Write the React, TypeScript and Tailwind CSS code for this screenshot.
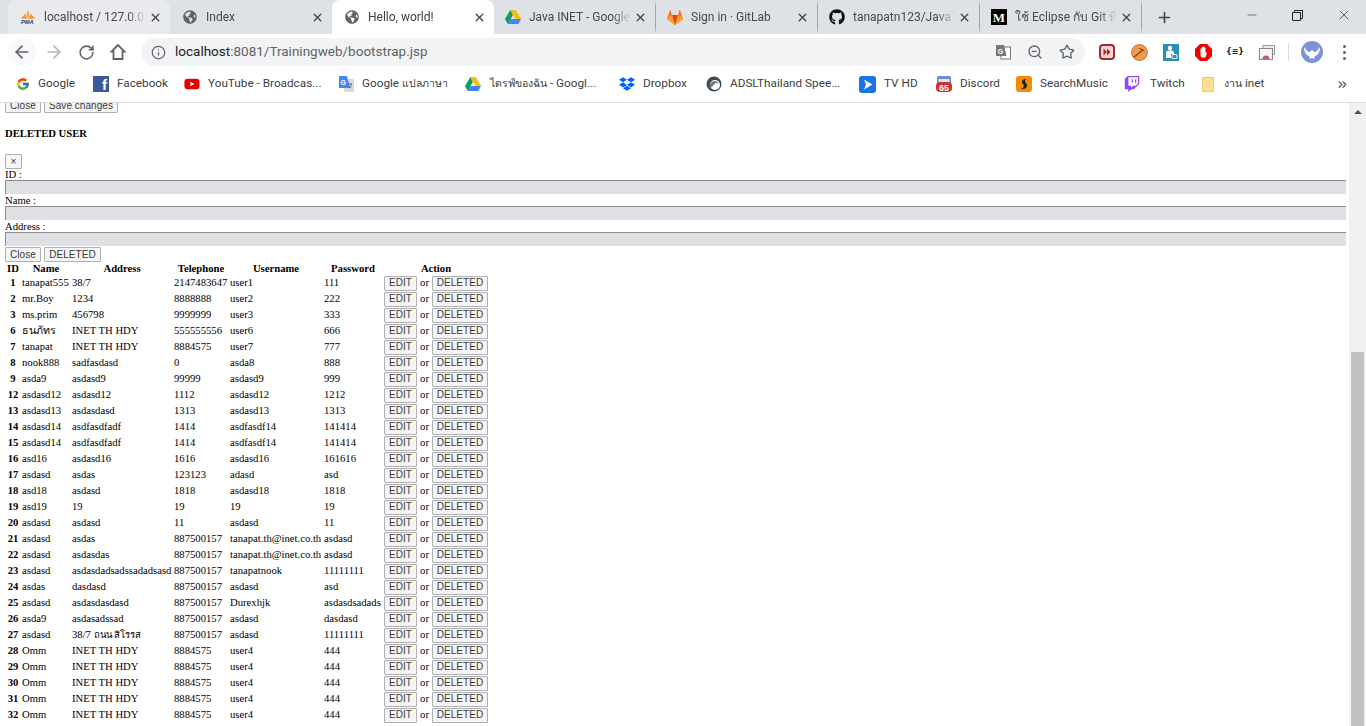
import { ReactNode } from 'react';
import { FaGlobeAmericas, FaGithub, FaDropbox, FaTwitch, FaYoutube } from 'react-icons/fa';
import { FcGoogle } from 'react-icons/fc';
import { ArrowLeft, ArrowRight, RotateCw, Info, ZoomOut, Star, ChevronsRight, Plus, Minus, X } from 'lucide-react';

function DriveIcon() {
  return (
    <svg width="16" height="14" viewBox="0 0 16 14">
      <path d="M5.3 0h5.4l5.3 9h-5.4z" fill="#fbbc04" />
      <path d="M5.3 0 0 9l2.7 5 5.2-9z" fill="#0f9d58" />
      <path d="M5.4 9H16l-2.7 5H2.7z" fill="#4285f4" />
    </svg>
  );
}

function GitlabIcon() {
  return (
    <svg width="16" height="15" viewBox="0 0 16 15">
      <path d="M8 15 .4 9.2a.6.6 0 0 1-.2-.7L2.8.4c.1-.4.6-.4.7 0L5 5h6l1.5-4.6c.1-.4.6-.4.7 0l2.6 8.1a.6.6 0 0 1-.2.7z" fill="#fc6d26" />
      <path d="M8 15 5 5h6z" fill="#e24329" />
      <path d="M8 15 .4 9.2 2 6.5 5 5z" fill="#fca326" />
      <path d="m8 15 7.6-5.8L14 6.5 11 5z" fill="#fca326" />
    </svg>
  );
}

function PmaIcon() {
  return (
    <svg width="18" height="16" viewBox="0 0 18 16">
      <path d="M1 10 6 4l1 6zM6.5 10 9 0l3 10zM11 10l1-6 5 6z" fill="#f29a2e" />
      <path d="M8 10 9 3l1.5 7z" fill="#f7c98a" />
      <text x="1" y="15.5" fontFamily="Liberation Sans, sans-serif" fontSize="6.5" fontWeight="700" fontStyle="italic" fill="#27408b">PMA</text>
    </svg>
  );
}

function TranslateIcon() {
  return (
    <svg width="16" height="16" viewBox="0 0 16 16">
      <rect x="6" y="3" width="10" height="13" fill="#d9d9d9" />
      <path d="M1 0h8l3 12H1z" fill="#4285f4" />
      <text x="2.5" y="9" fontFamily="Liberation Sans, sans-serif" fontSize="7" fontWeight="700" fill="#fff">G</text>
      <path d="M10 8h4M12 7v1M13.5 8c-.5 2-1.500 3-3 4M10.800 9.500c.6 1 1.500 2 3 2.500" stroke="#666" strokeWidth="0.8" fill="none" />
    </svg>
  );
}

function AdslIcon() {
  return (
    <svg width="16" height="16" viewBox="0 0 16 16">
      <circle cx="8" cy="8" r="7.500" fill="#3f4a52" />
      <circle cx="9" cy="9" r="5" fill="#fff" />
      <path d="M4 13c-1-4 1-8 5-8 2 0 3.500 1.500 4 3-1-1-3-1.500-4.500 0C7 9.500 6 11 4 13z" fill="#6c7a84" />
    </svg>
  );
}

function TvHdIcon() {
  return (
    <svg width="17" height="17" viewBox="0 0 17 17">
      <rect width="17" height="17" rx="3" fill="#1a73e8" />
      <path d="M5 3.500 13.500 8.500 5 13.500l2-5z" fill="#fff" />
    </svg>
  );
}

function DiscordIcon() {
  return (
    <svg width="16" height="16" viewBox="0 0 16 16">
      <rect x="1" y="0" width="14" height="13" rx="2" fill="#7289da" />
      <rect x="2.500" y="3" width="11" height="8" fill="#dfe3f0" />
      <rect x="0" y="6" width="16" height="10" rx="4" fill="#d32f2f" />
      <text x="8" y="14.500" textAnchor="middle" fontFamily="Liberation Sans, sans-serif" fontSize="9" fontWeight="700" fill="#fff">65</text>
    </svg>
  );
}

function SearchMusicIcon() {
  return (
    <svg width="16" height="16" viewBox="0 0 16 16">
      <rect width="16" height="16" rx="3" fill="#f28c00" />
      <path d="M10.500 3C7 2.500 5 5 6.500 7.500c1 1.500 2 2 1 3.500-.7 1-2 1.500-3 1.500 3 1.500 6 0 6.500-2.500.4-2-1.500-3-2-4.500-.3-1 .5-2 1.500-2.500z" fill="#222" />
    </svg>
  );
}

function FolderIcon() {
  return (
    <svg width="12" height="15" viewBox="0 0 12 15">
      <rect x="0.500" y="0.500" width="11" height="14" fill="#fde08d" stroke="#e6cc85" />
    </svg>
  );
}

function MediumIcon() {
  return (
    <span className="w-4 h-4 bg-black text-white flex items-center justify-center font-['Liberation_Serif',serif] font-bold text-[13px] leading-none">M</span>
  );
}

function HomeIcon() {
  return (
    <svg width="18" height="18" viewBox="0 0 18 18" fill="none" stroke="#5f6368" strokeWidth="1.800" strokeLinejoin="miter">
      <path d="M9 2 2.500 8.500H4.500V16H13.500V8.500H15.500z" />
    </svg>
  );
}

function FfIcon() {
  return (
    <svg width="16" height="16" viewBox="0 0 16 16">
      <rect x="1" y="1" width="14" height="14" rx="3" fill="#f4d6d6" stroke="#a52a2f" strokeWidth="2" />
      <path d="M4.500 4.500 8 8 4.500 11.500zM8 4.500 11.500 8 8 11.500z" fill="#a52a2f" />
    </svg>
  );
}

function PickIcon() {
  return (
    <svg width="17" height="17" viewBox="0 0 17 17">
      <circle cx="8.500" cy="8.500" r="8" fill="#f19a4d" stroke="#b86a2a" strokeWidth="0.800" />
      <path d="M3 13 12 6" stroke="#7a4a20" strokeWidth="1.300" />
      <path d="M7 4.500c3-1 6 .5 7 3.500-2-2-4-2.500-7-3.500z" fill="#7a4a20" />
    </svg>
  );
}

function PersonIcon() {
  return (
    <svg width="16" height="17" viewBox="0 0 16 17">
      <rect width="16" height="17" fill="#2a8fb8" />
      <circle cx="7" cy="4" r="2.200" fill="#fff" />
      <path d="M3 14V9c0-2 1.500-2.500 4-2.500s4 .5 4 2V10H8v4z" fill="#fff" />
      <rect x="9" y="10.500" width="5" height="4" rx="1" fill="none" stroke="#fff" strokeWidth="1" />
    </svg>
  );
}

function StopHandIcon() {
  return (
    <svg width="17" height="17" viewBox="0 0 17 17">
      <path d="M5 0h7l5 5v7l-5 5H5l-5-5V5z" fill="#e00" />
      <path d="M5.500 8V5c0-1 1.200-1 1.200 0V3.500c0-1 1.300-1 1.300 0V3c0-1 1.300-1 1.300 0v1c0-1 1.200-1 1.200 0v5c.5-1 1.700-.5 1.300.5L10.500 13.500H7C5.500 13.500 5.500 11 5.500 8z" fill="#fff" />
    </svg>
  );
}

function CardsIcon() {
  return (
    <svg width="16" height="15" viewBox="0 0 16 15">
      <rect x="4" y="0.500" width="11.500" height="9" fill="#eee" stroke="#999" />
      <rect x="0.500" y="3.500" width="13" height="11" fill="#f5f5f5" stroke="#888" />
      <path d="M3.500 14a3.500 3.500 0 0 1 7 0z" fill="#d9534f" />
      <path d="M5.500 14a1.500 1.500 0 0 1 3 0z" fill="#4a90d9" />
    </svg>
  );
}

function AvatarIcon() {
  return (
    <svg width="22" height="22" viewBox="0 0 22 22">
      <circle cx="11" cy="11" r="11" fill="#7d93d6" />
      <path d="M3 6c2 3 4 5 6 5l2-2 2 2c2 0 4-2 6-5 0 5-2 8-5 9l-1 3-2-1-2 1-1-3c-3-1-5-4-5-9z" fill="#fff" />
    </svg>
  );
}

function TabClose() {
  return <X size={13} strokeWidth={2.6} className="text-[#45484c]" />;
}

type TabInfo = { title: string; icon: ReactNode };

const tabs: TabInfo[] = [
  { title: 'localhost / 127.0.0.1', icon: <PmaIcon /> },
  { title: 'Index', icon: <FaGlobeAmericas size={14} className="text-[#5f6368] mx-px" /> },
  { title: 'Hello, world!', icon: <FaGlobeAmericas size={14} className="text-[#5f6368] mx-px" /> },
  { title: 'Java INET - Google Drive', icon: <DriveIcon /> },
  { title: 'Sign in · GitLab', icon: <GitlabIcon /> },
  { title: 'tanapatn123/JavaTraining', icon: <FaGithub size={16} className="text-[#111]" /> },
  { title: 'ใช้ Eclipse กับ Git ที่ GitLab', icon: <MediumIcon /> },
];

function Tab({ tab, index }: { tab: TabInfo; index: number }) {
  const active = index === 2;
  const hovered = index === 0;
  const divider = index >= 3;
  return (
    <div
      className={
        active
          ? 'w-[162px] h-[34px] flex items-center pl-[12px] pr-[7px] bg-white rounded-t-[8px] text-[#3c4043]'
          : hovered
            ? 'w-[162px] h-[34px] flex items-center pl-[12px] pr-[7px] bg-[#e8eaed] rounded-t-[8px] text-[#45484c]'
            : divider
              ? 'w-[162px] h-[34px] flex items-center pl-[11px] pr-[7px] border-r border-[#9fa2a6] border-y-[7px] border-y-[#dee1e6] text-[#45484c]'
              : 'w-[162px] h-[34px] flex items-center pl-[12px] pr-[7px] text-[#45484c]'
      }
    >
      <span className="w-4 flex items-center justify-center shrink-0">{tab.icon}</span>
      <span className="flex-1 ml-2 overflow-hidden whitespace-nowrap text-[12px] [mask-image:linear-gradient(90deg,#000_82%,transparent)]">
        {tab.title}
      </span>
      <span className="w-4 ml-[1px] flex items-center justify-center shrink-0"><TabClose /></span>
    </div>
  );
}

function TabStrip() {
  return (
    <div className="h-[34px] bg-[#dee1e6] flex pl-[8px] shrink-0 font-['Roboto',sans-serif]">
      {tabs.map((t, i) => (
        <Tab key={t.title} tab={t} index={i} />
      ))}
      <div className="w-[44px] flex items-center justify-center">
        <Plus size={17} strokeWidth={2.4} className="text-[#45484c]" />
      </div>
      <div className="flex-1 flex justify-end">
        <div className="w-[45px] h-[30px] flex items-center justify-center"><Minus size={14} strokeWidth={1} className="text-[#222]" /></div>
        <div className="w-[47px] h-[30px] flex items-center justify-center">
          <svg width="11" height="11" viewBox="0 0 11 11" fill="none" stroke="#222">
            <path d="M.5 2.500h8v8h-8zM2.500 2.500v-2h8v8h-2" />
          </svg>
        </div>
        <div className="w-[45px] h-[30px] flex items-center justify-center"><X size={16} strokeWidth={1} className="text-[#222]" /></div>
      </div>
    </div>
  );
}

function TranslateGray() {
  return (
    <svg width="16" height="16" viewBox="0 0 16 16">
      <rect x="6" y="3" width="9.500" height="12" fill="#fff" stroke="#777" />
      <path d="M1 1h8l2.500 11H1z" fill="#777" />
      <text x="2.800" y="9.500" fontFamily="Liberation Sans, sans-serif" fontSize="7" fontWeight="700" fill="#fff">G</text>
    </svg>
  );
}

function Toolbar() {
  return (
    <div className="h-[32px] bg-white flex items-end shrink-0">
      <div className="w-[141px] h-[28px] flex items-center pl-[8px] gap-[4px] text-[#5f6368]">
        <span className="w-[28px] h-[28px] rounded-full bg-[#f8f9fa] flex items-center justify-center"><ArrowLeft size={20} strokeWidth={2} /></span>
        <span className="w-[28px] h-[28px] flex items-center justify-center text-[#b4b6b9]"><ArrowRight size={20} strokeWidth={2} /></span>
        <span className="w-[28px] h-[28px] flex items-center justify-center"><RotateCw size={17} strokeWidth={2.2} /></span>
        <span className="w-[28px] h-[28px] flex items-center justify-center"><HomeIcon /></span>
      </div>
      <div className="w-[944px] h-[28px] rounded-full bg-[#f1f3f4] flex items-center pl-[10px]">
        <Info size={15} strokeWidth={2} className="text-[#5f6368] shrink-0" />
        <span className="ml-[9px] text-[13.5px] leading-none text-[#202124] font-['Roboto',sans-serif]">
          localhost<span className="text-[#5f6368]">:8081/Trainingweb/bootstrap.jsp</span>
        </span>
        <span className="flex-1" />
        <span className="w-[32px] flex justify-center"><TranslateGray /></span>
        <span className="w-[32px] flex justify-center"><ZoomOut size={16} strokeWidth={2} className="text-[#5f6368]" /></span>
        <span className="w-[32px] flex justify-center"><Star size={16} strokeWidth={2} className="text-[#5f6368]" /></span>
        <span className="w-[2px]" />
      </div>
      <div className="flex-1 h-[28px] flex items-center pl-[6px]">
        <span className="w-[32px] flex justify-center"><FfIcon /></span>
        <span className="w-[32px] flex justify-center"><PickIcon /></span>
        <span className="w-[32px] flex justify-center"><PersonIcon /></span>
        <span className="w-[32px] flex justify-center"><StopHandIcon /></span>
        <span className="w-[32px] flex justify-center text-[8px] font-bold text-[#222] font-['DejaVu_Sans',sans-serif]">{'{≡}'}</span>
        <span className="w-[32px] flex justify-center"><CardsIcon /></span>
        <span className="w-px h-[18px] bg-[#dadce0] ml-[5px]" />
        <span className="ml-[12px]"><AvatarIcon /></span>
        <span className="ml-[20px] flex flex-col gap-[3px]">
          <i className="w-[3px] h-[3px] rounded-full bg-[#5f6368]" />
          <i className="w-[3px] h-[3px] rounded-full bg-[#5f6368]" />
          <i className="w-[3px] h-[3px] rounded-full bg-[#5f6368]" />
        </span>
      </div>
    </div>
  );
}

function BookmarkBar() {
  return (
    <div className="h-[37px] bg-white border-b border-[#dadce0] flex items-center pl-[16px] text-[11.75px] text-[#3c4043] shrink-0 font-['Roboto',sans-serif] whitespace-nowrap">
      <div className="w-[77px] flex items-center gap-2"><span className="w-[14px] flex justify-center"><FcGoogle size={14} /></span>Google</div>
      <div className="w-[91px] flex items-center gap-2">
        <span className="w-4 h-4 bg-[#3b5998] flex items-end justify-end pr-[2px] text-white font-['Liberation_Sans',sans-serif] font-bold text-[15px] leading-[15px]">f</span>Facebook
      </div>
      <div className="w-[154px] flex items-center gap-2"><FaYoutube size={16} className="text-[#e60000]" />YouTube - Broadcas...</div>
      <div className="w-[127px] flex items-center gap-2"><TranslateIcon /><span>Google <span className="text-[10.5px]">แปลภาษา</span></span></div>
      <div className="w-[154px] flex items-center gap-[9px]"><DriveIcon /><span><span className="text-[10.5px]">ไดรฟ์ของฉัน</span> - Googl...</span></div>
      <div className="w-[87px] flex items-center gap-2"><FaDropbox size={16} className="text-[#0061ff]" />Dropbox</div>
      <div className="w-[153px] flex items-center gap-2"><AdslIcon />ADSLThailand Spee...</div>
      <div className="w-[77px] flex items-center gap-2"><TvHdIcon />TV HD</div>
      <div className="w-[80px] flex items-center gap-2"><DiscordIcon />Discord</div>
      <div className="w-[108px] flex items-center gap-2"><SearchMusicIcon />SearchMusic</div>
      <div className="w-[78px] flex items-center gap-[10px]"><FaTwitch size={16} className="text-[#9146ff]" />Twitch</div>
      <div className="flex-1 flex items-center gap-[10px]"><FolderIcon /><span><span className="text-[10.5px]">งาน</span> inet</span></div>
      <ChevronsRight size={13} strokeWidth={2.4} className="text-[#5f6368] mr-[17px]" />
    </div>
  );
}

const btn = "h-[15px] px-[4px] flex items-center justify-center whitespace-nowrap border border-[#b0b0b0] rounded-[1px] bg-[#f5f5f5] text-[#3a3a3a] text-[10px] leading-none tracking-[0.05px] font-['Liberation_Sans',sans-serif]";

type Row = [string, string, ReactNode, string, string, string];

const rows: Row[] = [
  ['1', 'tanapat555', '38/7', '2147483647', 'user1', '111'],
  ['2', 'mr.Boy', '1234', '8888888', 'user2', '222'],
  ['3', 'ms.prim', '456798', '9999999', 'user3', '333'],
  ['6', 'ธนภัทร', 'INET TH HDY', '555555556', 'user6', '666'],
  ['7', 'tanapat', 'INET TH HDY', '8884575', 'user7', '777'],
  ['8', 'nook888', 'sadfasdasd', '0', 'asda8', '888'],
  ['9', 'asda9', 'asdasd9', '99999', 'asdasd9', '999'],
  ['12', 'asdasd12', 'asdasd12', '1112', 'asdasd12', '1212'],
  ['13', 'asdasd13', 'asdasdasd', '1313', 'asdasd13', '1313'],
  ['14', 'asdasd14', 'asdfasdfadf', '1414', 'asdfasdf14', '141414'],
  ['15', 'asdasd14', 'asdfasdfadf', '1414', 'asdfasdf14', '141414'],
  ['16', 'asd16', 'asdasd16', '1616', 'asdasd16', '161616'],
  ['17', 'asdasd', 'asdas', '123123', 'adasd', 'asd'],
  ['18', 'asd18', 'asdasd', '1818', 'asdasd18', '1818'],
  ['19', 'asd19', '19', '19', '19', '19'],
  ['20', 'asdasd', 'asdasd', '11', 'asdasd', '11'],
  ['21', 'asdasd', 'asdas', '887500157', 'tanapat.th@inet.co.th', 'asdasd'],
  ['22', 'asdasd', 'asdasdas', '887500157', 'tanapat.th@inet.co.th', 'asdasd'],
  ['23', 'asdasd', 'asdasdadsadssadadsasd', '887500157', 'tanapatnook', '11111111'],
  ['24', 'asdas', 'dasdasd', '887500157', 'asdasd', 'asd'],
  ['25', 'asdasd', 'asdasdasdasd', '887500157', 'Durexhjk', 'asdasdsadads'],
  ['26', 'asda9', 'asdasadssad', '887500157', 'asdasd', 'dasdasd'],
  ['27', 'asdasd', <>38/7 <span className="text-[9.5px]">ถนน สิโรรส</span></>, '887500157', 'asdasd', '11111111'],
  ['28', 'Omm', 'INET TH HDY', '8884575', 'user4', '444'],
  ['29', 'Omm', 'INET TH HDY', '8884575', 'user4', '444'],
  ['30', 'Omm', 'INET TH HDY', '8884575', 'user4', '444'],
  ['31', 'Omm', 'INET TH HDY', '8884575', 'user4', '444'],
  ['32', 'Omm', 'INET TH HDY', '8884575', 'user4', '444'],
];

function UserTable() {
  return (
    <table className="table-fixed w-[484px] text-[10.67px] leading-[12px] text-black">
      <colgroup>
        <col className="w-[16px]" />
        <col className="w-[50px]" />
        <col className="w-[102px]" />
        <col className="w-[56px]" />
        <col className="w-[94px]" />
        <col className="w-[60px]" />
        <col className="w-[106px]" />
      </colgroup>
      <thead>
        <tr className="h-[13px]">
          {['ID', 'Name', 'Address', 'Telephone', 'Username', 'Password', 'Action'].map(h => (
            <th key={h} className="p-0 text-center font-bold align-top">{h}</th>
          ))}
        </tr>
      </thead>
      <tbody>
        {rows.map(r => (
          <tr key={r[0]} className="h-[16px]">
            <td className="p-0 pt-px align-top text-center font-bold">{r[0]}</td>
            <td className="p-0 pt-px pl-px align-top whitespace-nowrap">{r[1]}</td>
            <td className="p-0 pt-px pl-px align-top whitespace-nowrap">{r[2]}</td>
            <td className="p-0 pt-px pl-px align-top whitespace-nowrap">{r[3]}</td>
            <td className="p-0 pt-px pl-px align-top whitespace-nowrap">{r[4]}</td>
            <td className="p-0 pt-px pl-px align-top whitespace-nowrap">{r[5]}</td>
            <td className="p-0 pl-px">
              <div className="flex items-center">
                <button className={`${btn} w-[33px]`}>EDIT</button>
                <span className="w-[15px] text-center pb-[2px]">or</span>
                <button className={`${btn} w-[56px]`}>DELETED</button>
              </div>
            </td>
          </tr>
        ))}
      </tbody>
    </table>
  );
}

function Field({ label, first }: { label: string; first?: boolean }) {
  return (
    <>
      <div className={first ? 'h-[11px] leading-[11px]' : 'h-[12px] leading-[12px]'}>{label}</div>
      <div className="h-[14px] bg-[#dfe0e4] border-t border-l border-[#8c8c8c]" />
    </>
  );
}

function Page() {
  return (
    <div className="flex-1 flex overflow-hidden bg-white">
      <div className="flex-1 pl-[5px] pr-[3px] text-[10.67px] text-black">
        <div className="h-[10px] overflow-hidden flex items-end gap-[3px]">
          <button className={`${btn} w-[36px] shrink-0`}>Close</button>
          <button className={`${btn} w-[74px] shrink-0`}>Save changes</button>
        </div>
        <h5 className="mt-[14px] h-[12px] leading-[12px] font-bold">DELETED USER</h5>
        <button className={`${btn} mt-[15px] w-[17px]`}>×</button>
        <Field label="ID :" first />
        <Field label="Name :" />
        <Field label="Address :" />
        <div className="mt-px flex gap-[3px]">
          <button className={`${btn} w-[36px]`}>Close</button>
          <button className={`${btn} w-[57px]`}>DELETED</button>
        </div>
        <UserTable />
      </div>
      <div className="w-[17px] bg-[#f1f1f1] flex flex-col items-center shrink-0">
        <div className="h-[17px] flex items-center justify-center">
          <span className="w-0 h-0 border-x-[4px] border-x-transparent border-b-[4px] border-b-[#505050]" />
        </div>
        <div className="mt-[232px] w-[13px] flex-1 bg-[#c1c1c1]" />
      </div>
    </div>
  );
}

export default function App() {
  return (
    <div className="h-[726px] flex flex-col overflow-hidden bg-white">
      <TabStrip />
      <Toolbar />
      <BookmarkBar />
      <div className="flex-1 flex min-h-0 font-['Liberation_Serif',serif]">
        <Page />
      </div>
    </div>
  );
}
